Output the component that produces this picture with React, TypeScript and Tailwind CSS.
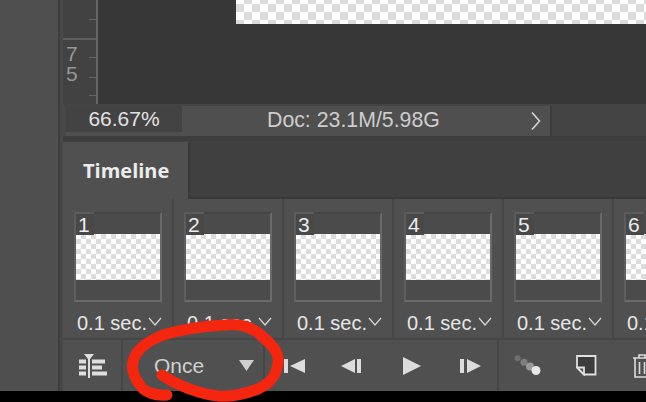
const Ruler = () => (
  <div className="relative w-[35px] h-full bg-[#424242] border-r-2 border-[#666]">
    <div className="absolute left-0 right-0 top-[38px] h-[2px] bg-[#5e5e5e]" />
    <div className="absolute right-0 top-[19px] w-[7px] h-px bg-[#666]" />
    <div className="absolute right-0 top-[57px] w-[7px] h-px bg-[#666]" />
    <div className="absolute right-0 top-[77px] w-[7px] h-px bg-[#666]" />
    <div className="absolute right-0 top-[95px] w-[7px] h-px bg-[#666]" />
    <div className="pt-[44px] pl-[3px] text-[21px] leading-[20px] font-['Liberation_Sans',sans-serif] text-[#969696]">
      <div>7</div>
      <div>5</div>
    </div>
  </div>
);

const StatusBar = () => (
  <div className="h-[37px] flex flex-col bg-[#3d3d3d]">
    <div className="h-[2px] bg-[#444]" />
    <div className="h-[30px] flex bg-[#4f4f4f] font-['Liberation_Sans',sans-serif]">
      <div className="w-[3px] bg-[#484848]" />
      <div className="w-[116px] h-[26px] flex items-center justify-center bg-[#434343] text-[21px] text-[#e2e2e2]">
        66.67%
      </div>
      <div className="w-[368px] relative flex items-center pl-[85px] text-[21.3px] text-[#cdcdcd]">
        Doc: 23.1M/5.98G
        <svg className="absolute left-[348px] top-[5px]" width="12" height="20" viewBox="0 0 12 20" fill="none">
          <path d="M2 1.5L9.5 10L2 18.5" stroke="#d4d4d4" strokeWidth="1.6" />
        </svg>
      </div>
      <div className="w-[2px] bg-[#3c3c3c]" />
      <div className="flex-1 bg-[#444]" />
    </div>
  </div>
);

const Frame = ({ n }: { n: number }) => (
  <div className="w-[110px] shrink-0 h-full border-r-2 border-[#464646] pl-[10px] pt-[13px]">
    <div className="relative w-[88px] h-[90px] bg-[#4b4b4b] border-2 border-t-[#454545] border-l-[#5f5f5f] border-r-[#6a6a6a] border-b-[#6a6a6a] pt-[20px]">
      <div className="h-[46px] bg-[conic-gradient(#dcdcdc_25%,#fff_0_50%,#dcdcdc_0_75%,#fff_0)] bg-[length:10px_10px]" />
      <div className="absolute left-[-2px] top-[-2px] w-[20px] h-[23px] bg-[#484848] border-t-2 border-l-2 border-[#5c5c5c] pl-[2px] text-[21px] leading-[21px] text-[#ececec] font-['Liberation_Sans',sans-serif]">
        {n}
      </div>
    </div>
    <div className="mt-[8px] flex items-center pl-[3px] text-[20px] leading-[26px] whitespace-nowrap text-[#e6e6e6] font-['Liberation_Sans',sans-serif]">
      0.1 sec.
      <svg className="ml-px mb-[4px] shrink-0" width="14" height="9" viewBox="0 0 14 9" fill="none">
        <path d="M1 1L7 8L13 1" stroke="#d8d8d8" strokeWidth="1.2" />
      </svg>
    </div>
  </div>
);

const Controls = () => (
  <div className="h-[53px] flex bg-[#505050] border-t-2 border-[#464646] text-[#dcdcdc]">
    <div className="w-[60px] border-r-2 border-[#464646] flex items-center justify-center">
      <svg width="30" height="24" viewBox="0 0 30 24" fill="#dedede">
        <path d="M7 0h10l-4 5v19h-2V5z" />
        <path d="M2 5.5h7v4H2zM2 11.5h7v4H2zM2 17.5h7v4H2zM15 5.5h13v4H15zM15 11.5h10v4H15zM15 17.5h15v4H15z" />
      </svg>
    </div>
    <div className="w-[142px] border-r-2 border-[#464646] flex items-center justify-between pl-[31px] pr-[9px] text-[21px] text-[#cfcfcf] font-['Liberation_Sans',sans-serif]">
      Once
      <svg width="15" height="11" viewBox="0 0 15 11" fill="#cfcfcf">
        <path d="M0 0h15L7.5 11z" />
      </svg>
    </div>
    <div className="w-[234px] border-r-2 border-[#464646] flex items-center pl-[19px]">
      <svg width="21" height="14" viewBox="0 0 21 14" fill="#dcdcdc">
        <path d="M0 0h4v14H0zM21 0v14L6 7z" />
      </svg>
      <svg className="ml-[36px]" width="21" height="14" viewBox="0 0 21 14" fill="#dcdcdc">
        <path d="M14 0v14L0 7zM16 0h4v14h-4z" />
      </svg>
      <svg className="ml-[41px]" width="18" height="18" viewBox="0 0 18 18" fill="#dcdcdc">
        <path d="M0 0v18l18-9z" />
      </svg>
      <svg className="ml-[39px]" width="21" height="14" viewBox="0 0 21 14" fill="#dcdcdc">
        <path d="M0 0h4v14H0zM7 0v14l14-7z" />
      </svg>
    </div>
    <div className="flex-1 flex items-center pl-[15px] overflow-hidden">
      <svg className="shrink-0" width="28" height="24" viewBox="0 0 28 24">
        <circle cx="3.7" cy="4.2" r="3" fill="#6e6e6e" />
        <circle cx="10" cy="8.2" r="3.5" fill="#808080" />
        <circle cx="16" cy="12.5" r="4" fill="#9a9a9a" />
        <circle cx="22" cy="16.5" r="4.5" fill="#e6e6e6" />
      </svg>
      <svg className="ml-[34px] shrink-0" width="21" height="21" viewBox="0 0 21 21" fill="none">
        <path d="M1 1h18.5v18.5H8L1 12.5z" fill="#3c3c3c" stroke="#e0e0e0" strokeWidth="1.8" />
        <path d="M1 12.5h7V19.5z" fill="#505050" stroke="#e0e0e0" strokeWidth="1.8" />
      </svg>
      <svg className="ml-[36px] shrink-0" width="18" height="24" viewBox="0 0 18 24" fill="none" stroke="#dcdcdc" strokeWidth="1.6">
        <path d="M0 4h18M6 4V1h6v3M2 4v19h14V4M6.5 8v12M11.5 8v12" />
      </svg>
    </div>
  </div>
);

export default function App() {
  return (
    <div className="relative w-[646px] h-[402px] overflow-hidden bg-black">
      <div className="h-[391px] flex">
        <div className="w-[58px] shrink-0 bg-[#4f4f4f] border-r-2 border-[#3d3d3d] box-content" />
        <div className="w-[3px] shrink-0 bg-[#484848]" />
        <div className="flex-1 flex flex-col min-w-0">
          <div className="h-[104px] flex">
            <Ruler />
            <div className="flex-1 bg-[#373737] pl-[138px]">
              <div className="h-[24px] bg-[conic-gradient(#dcdcdc_25%,#fff_0_50%,#dcdcdc_0_75%,#fff_0)] bg-[length:16px_16px] bg-[position:0_-4px]" />
            </div>
          </div>
          <StatusBar />
          <div className="h-[58px] flex bg-[#404040] border-b-2 border-[#383838]">
            <div className="w-[127px] h-[57px] mt-px bg-[#505050] border-r-2 border-[#3a3a3a] pl-[20px] pt-[15px] text-[20px] leading-[28px] font-bold text-[#ececec] font-['Open_Sans',sans-serif]">
              Timeline
            </div>
          </div>
          <div className="h-[139px] flex bg-[#505050] overflow-hidden pl-px">
            {[1, 2, 3, 4, 5, 6].map((n) => (
              <Frame key={n} n={n} />
            ))}
          </div>
          <Controls />
        </div>
      </div>
      {/* red marker scribble drawn over the screenshot */}
      <svg className="absolute left-0 top-0 pointer-events-none blur-[0.6px]" width="646" height="402" viewBox="0 0 646 402" fill="none">
        <path
          d="M167 395C155 396 144 392 140 385C134 377 131 370 133 362C135 352 143 343 163 335C180 330 205 326 225 325C242 323 254 328 264 338C272 345 279 352 278 362C277 375 271 383 258 389C245 394 232 397 218 396C200 394 178 386 162 375"
          stroke="#f5260f"
          strokeWidth="11"
          strokeLinecap="round"
          strokeLinejoin="round"
        />
      </svg>
    </div>
  );
}
